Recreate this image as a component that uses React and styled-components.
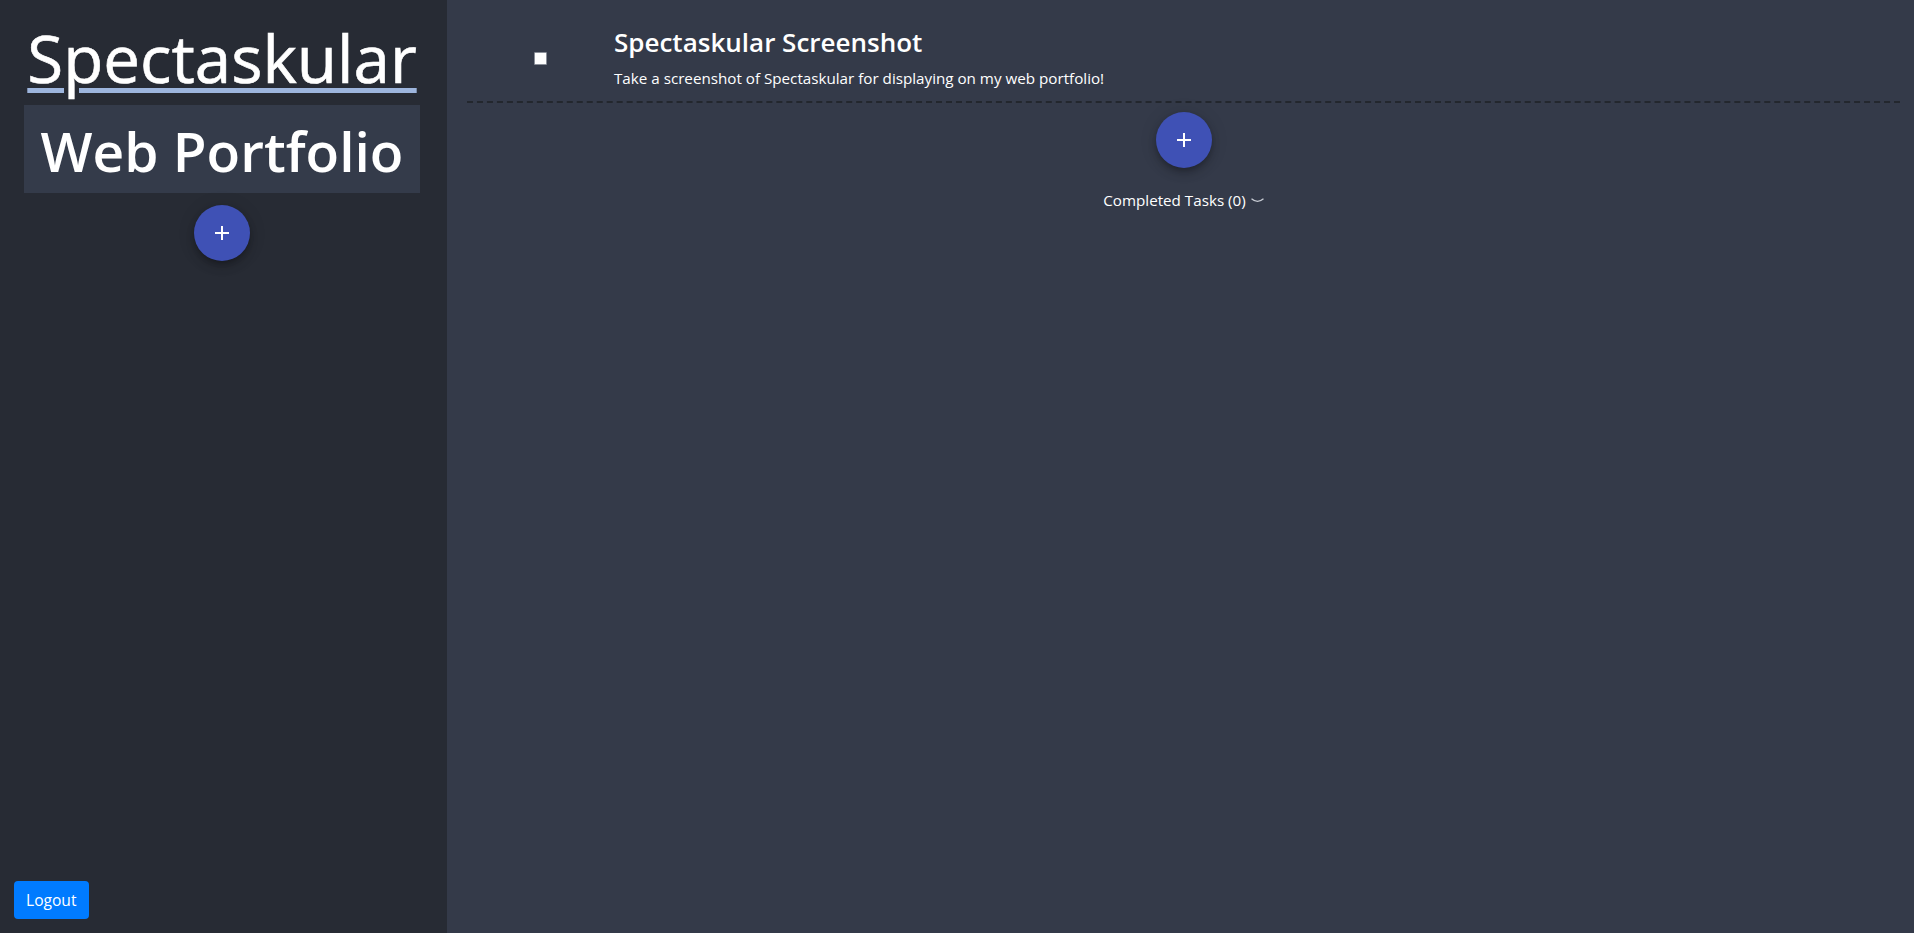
import React from 'react';
import styled, { createGlobalStyle } from 'styled-components';

const GlobalStyle = createGlobalStyle`
  html, body {
    margin: 0;
    padding: 0;
    height: 100%;
    overflow: hidden;
  }
  body {
    font-family: "Open Sans", "Noto Sans", sans-serif;
    color: #fff;
    background: #343a49;
  }
`;

const PlusIcon = () => (
  <svg width="16" height="16" viewBox="0 0 16 16" fill="none">
    <path d="M8 1v14M1 8h14" stroke="#fff" strokeWidth="2" />
  </svg>
);

const App = () => {
  return (
    <>
      <GlobalStyle />
      <Layout>
        <Sidebar>
          <Brand>Spectaskular</Brand>
          <ProjectName>Web Portfolio</ProjectName>
          <Fab $top={12}>
            <PlusIcon />
          </Fab>
          <LogoutButton>Logout</LogoutButton>
        </Sidebar>
        <Main>
          <TaskRow>
            <CheckCell>
              <Checkbox />
            </CheckCell>
            <TaskText>
              <TaskTitle>Spectaskular Screenshot</TaskTitle>
              <TaskDesc>
                Take a screenshot of Spectaskular for displaying on my web portfolio!
              </TaskDesc>
            </TaskText>
          </TaskRow>
          <Fab $top={9}>
            <PlusIcon />
          </Fab>
          <Completed>
            Completed Tasks (0)
            <svg width="13" height="6" viewBox="0 0 13 6" fill="none">
              <path d="M0.5 0.8 Q6.5 6 12.5 0.8" stroke="#c8ccd4" strokeWidth="1.2" />
            </svg>
          </Completed>
        </Main>
      </Layout>
    </>
  );
};

const Layout = styled.div`
  display: flex;
  height: 100vh;
`;

const Sidebar = styled.aside`
  width: 447px;
  box-sizing: border-box;
  padding-right: 3px;
  flex-shrink: 0;
  background: #272b34;
  display: flex;
  flex-direction: column;
  align-items: center;
`;

const Brand = styled.h1`
  margin: 19px 0 0;
  font-size: 65.5px;
  font-weight: 500;
  line-height: 77px;
  -webkit-text-stroke: 0.6px #fff;
  text-decoration: underline;
  text-decoration-color: #9db5dd;
  text-decoration-thickness: 5px;
  text-underline-offset: 5px;
`;

const ProjectName = styled.div`
  margin-top: 9px;
  width: 396px;
  box-sizing: border-box;
  height: 88px;
  background: #343b4a;
  text-align: center;
  font-size: 55px;
  font-weight: 600;
  line-height: 92px;
  white-space: nowrap;
`;

const Fab = styled.button`
  margin-top: ${(p) => p.$top}px;
  width: 56px;
  height: 56px;
  border-radius: 50%;
  border: none;
  background: #3f51b5;
  display: flex;
  align-items: center;
  justify-content: center;
  flex-shrink: 0;
  box-shadow: 0 3px 5px -1px rgba(0, 0, 0, 0.2), 0 6px 10px 0 rgba(0, 0, 0, 0.14),
    0 1px 18px 0 rgba(0, 0, 0, 0.12);
  cursor: pointer;
  padding: 0;
`;

const LogoutButton = styled.button`
  margin-top: auto;
  margin-bottom: 14px;
  align-self: flex-start;
  margin-left: 14px;
  height: 38px;
  padding: 0 12px;
  background: #007bff;
  color: #fff;
  border: none;
  border-radius: 4px;
  font-family: "Open Sans", sans-serif;
  font-size: 15.6px;
`;

const Main = styled.main`
  flex: 1;
  background: #343a49;
  padding: 0 14px 0 20px;
  display: flex;
  flex-direction: column;
  align-items: center;
`;

const TaskRow = styled.div`
  align-self: stretch;
  display: grid;
  grid-template-columns: 147px 1fr;
  padding: 27px 0 12px;
  border-bottom: 2px dashed #23272e;
`;

const CheckCell = styled.div`
  display: flex;
  justify-content: center;
  padding-top: 25px;
`;

const Checkbox = styled.span`
  width: 11px;
  height: 11px;
  background: #fff;
  border: 1px solid #8a8f99;
  border-radius: 1px;
`;

const TaskText = styled.div`
  display: flex;
  flex-direction: column;
`;

const TaskTitle = styled.h2`
  margin: 0;
  font-size: 26px;
  font-weight: 600;
  line-height: 31px;
`;

const TaskDesc = styled.p`
  margin: 9px 0 0;
  font-size: 15.2px;
  line-height: 22px;
`;

const Completed = styled.div`
  margin-top: 21px;
  font-size: 15.2px;
  line-height: 22px;
  display: flex;
  align-items: center;
  gap: 5px;
  svg {
    margin-top: 2px;
  }
`;

export default App;
